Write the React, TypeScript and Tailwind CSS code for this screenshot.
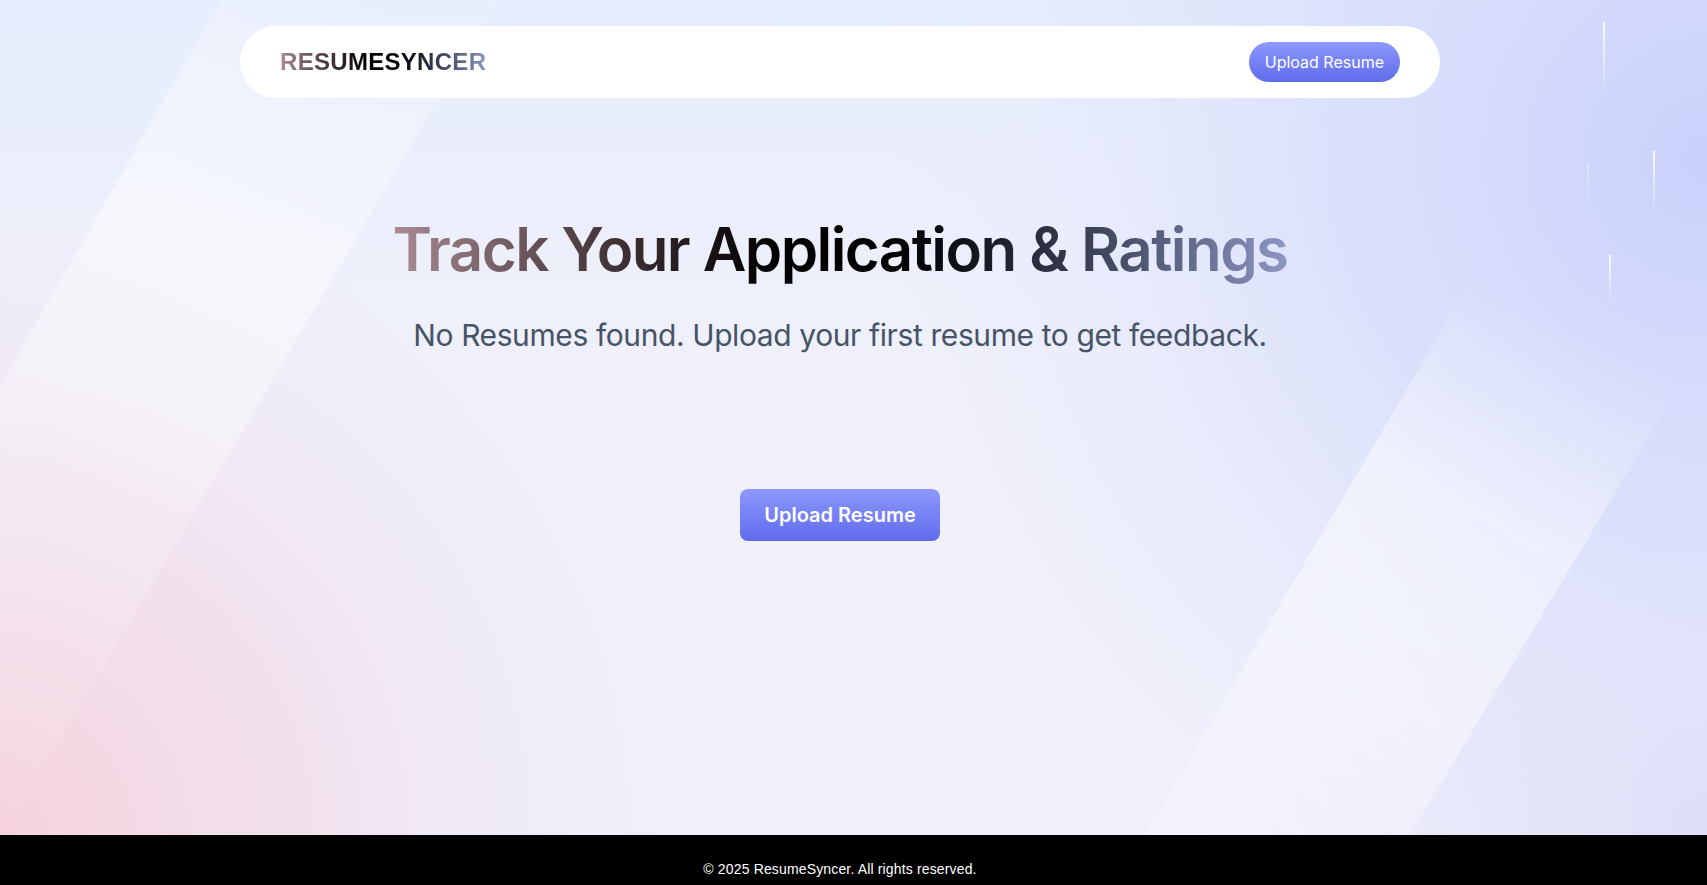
import React from 'react';

const sans = "font-['Inter','Noto_Sans',sans-serif]";
const arial = "font-['Liberation_Sans','Arial',sans-serif]";

function Backdrop() {
  return (
    <svg
      className="absolute inset-0 h-full w-full"
      viewBox="0 0 1707 835"
      preserveAspectRatio="none"
      aria-hidden
    >
      <defs>
        <radialGradient id="blueGlow" cx="1707" cy="160" r="820" gradientUnits="userSpaceOnUse">
          <stop offset="0" stopColor="#c9d1fc" />
          <stop offset="0.45" stopColor="#d6dcfb" stopOpacity="0.75" />
          <stop offset="1" stopColor="#e6eafb" stopOpacity="0" />
        </radialGradient>
        <radialGradient id="pinkGlow" cx="0" cy="835" r="660" gradientUnits="userSpaceOnUse">
          <stop offset="0" stopColor="#f6d2de" />
          <stop offset="0.5" stopColor="#f2dbe7" stopOpacity="0.65" />
          <stop offset="1" stopColor="#f0e8f4" stopOpacity="0" />
        </radialGradient>
        <radialGradient id="lilacGlow" cx="1707" cy="835" r="520" gradientUnits="userSpaceOnUse">
          <stop offset="0" stopColor="#dddcf7" />
          <stop offset="1" stopColor="#e9e8f8" stopOpacity="0" />
        </radialGradient>
        <linearGradient id="topTint" x1="0" y1="0" x2="0" y2="1">
          <stop offset="0" stopColor="#e6edfc" />
          <stop offset="0.45" stopColor="#eaeffc" stopOpacity="0" />
        </linearGradient>
        <linearGradient id="bandLeft" gradientUnits="userSpaceOnUse" x1="360" y1="0" x2="0" y2="835">
          <stop offset="0" stopColor="#ffffff" stopOpacity="0.1" />
          <stop offset="0.3" stopColor="#ffffff" stopOpacity="0.5" />
          <stop offset="0.65" stopColor="#ffffff" stopOpacity="0.2" />
          <stop offset="1" stopColor="#ffffff" stopOpacity="0" />
        </linearGradient>
        <linearGradient id="bandRight" gradientUnits="userSpaceOnUse" x1="1570" y1="320" x2="1280" y2="835">
          <stop offset="0" stopColor="#ffffff" stopOpacity="0" />
          <stop offset="0.35" stopColor="#ffffff" stopOpacity="0.45" />
          <stop offset="0.7" stopColor="#ffffff" stopOpacity="0.4" />
          <stop offset="1" stopColor="#ffffff" stopOpacity="0.2" />
        </linearGradient>
        <linearGradient id="streak" x1="0" y1="0" x2="0" y2="1">
          <stop offset="0" stopColor="#ffffff" stopOpacity="0.9" />
          <stop offset="1" stopColor="#ffffff" stopOpacity="0" />
        </linearGradient>
      </defs>
      <rect width="1707" height="835" fill="#eff0fb" />
      <rect width="1707" height="835" fill="url(#topTint)" />
      <rect width="1707" height="835" fill="url(#pinkGlow)" />
      <rect width="1707" height="835" fill="url(#lilacGlow)" />
      <rect width="1707" height="835" fill="url(#blueGlow)" />
      <polygon points="221,0 497,0 4,835 -257,835" fill="url(#bandLeft)" />
      <polygon points="1465,290 1680,385 1410,835 1145,835" fill="url(#bandRight)" />
      <rect x="1603" y="22" width="2" height="76" fill="url(#streak)" />
      <rect x="1653" y="151" width="2" height="66" fill="url(#streak)" />
      <rect x="1587" y="163" width="1.5" height="40" fill="url(#streak)" opacity="0.5" />
      <rect x="1609" y="255" width="2" height="50" fill="url(#streak)" />
    </svg>
  );
}

function Navbar() {
  return (
    <nav className="mx-auto flex w-full max-w-[1200px] flex-row items-center justify-between rounded-full bg-white p-4 px-10">
      <p
        className={`${arial} bg-gradient-to-r from-[#AB8C95] via-[#000000] to-[#8E97C5] bg-clip-text text-2xl font-bold tracking-[0.3px] text-transparent`}
      >
        RESUMESYNCER
      </p>
      <button
        className={`${sans} cursor-pointer rounded-full bg-gradient-to-b from-[#8e98ff] to-[#606beb] px-4 py-2 text-base text-white`}
      >
        Upload Resume
      </button>
    </nav>
  );
}

export default function App() {
  return (
    <div className="flex h-[885px] flex-col overflow-hidden">
      <main className="relative flex-1">
        <Backdrop />
        <div className="relative flex w-[1680px] flex-col pt-[26px]">
          <Navbar />
          <section className="mt-[114px] flex flex-col items-center">
            <div className="flex max-w-4xl flex-col items-center gap-[30px] text-center">
              <h1
                className={`${sans} w-[896px] bg-gradient-to-r from-[#AB8C95] via-[#000000] to-[#8E97C5] bg-clip-text text-6xl leading-tight font-semibold tracking-[-1.55px] text-transparent`}
              >
                Track Your Application &amp; Ratings
              </h1>
              <h2 className={`${sans} text-3xl tracking-[-0.4px] text-[#475467]`}>
                No Resumes found. Upload your first resume to get feedback.
              </h2>
            </div>
            <div className="mt-[136px] flex flex-col items-center justify-center gap-4">
              <button
                className={`${sans} cursor-pointer rounded-lg bg-gradient-to-b from-[#8e98ff] to-[#606beb] px-6 py-3 text-xl font-semibold text-white`}
              >
                Upload Resume
              </button>
            </div>
          </section>
        </div>
      </main>
      <footer className="h-[50px] shrink-0 bg-black">
        <div className="w-[1680px] pt-6 text-center">
          <p className={`${arial} text-sm tracking-[0.15px] text-white`}>
            © 2025 ResumeSyncer. All rights reserved.
          </p>
        </div>
      </footer>
    </div>
  );
}
